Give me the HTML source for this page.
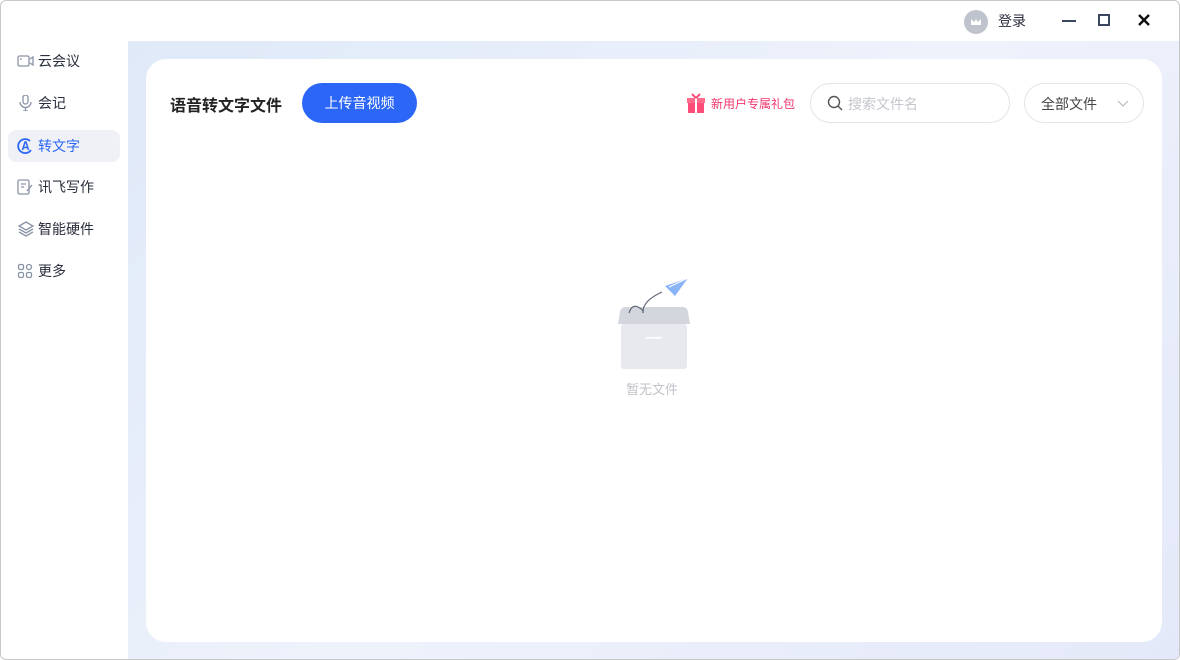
<!DOCTYPE html>
<html><head><meta charset="utf-8"><style>
*{box-sizing:border-box;margin:0;padding:0}
body{width:1180px;height:660px;overflow:hidden;font-family:"Liberation Sans","Noto Sans CJK SC",sans-serif;background:#fff}
.win{position:absolute;left:0;top:0;width:1180px;height:660px;border:1px solid #c8c8c8;border-radius:6px;overflow:hidden;background:#fff}
.main{position:absolute;left:127px;top:40px;right:0;bottom:0;background:linear-gradient(135deg,#dfe9f8,#eef2fb 50%,#e4e9f9)}
.card{position:absolute;left:18px;top:18px;right:17px;bottom:17px;background:#fff;border-radius:20px}
.nav{position:absolute;left:7px;width:112px;height:32px;border-radius:8px;font-size:14px;color:#2a2f3d;line-height:32px;padding-left:30px}
.nav svg{position:absolute;left:9px;top:8px}
.act{background:#eff1f6;color:#2b66f6}
</style></head><body><div class="win">
<div style="position:absolute;left:963px;top:9px;width:24px;height:24px;border-radius:50%;background:#bfc3cd"><svg width="24" height="24"><path d="M7 9l3 3 2-3 2 3 3-3v6H7z" fill="#fff"/></svg></div>
<div style="position:absolute;left:997px;top:10px;font-size:14px;color:#2a2f3d">登录</div>
<div style="position:absolute;left:1061px;top:19px;width:14px;height:2px;background:#3b4660"></div>
<div style="position:absolute;left:1097px;top:13px;width:12px;height:12px;border:2px solid #3b4660"></div>
<svg style="position:absolute;left:1136px;top:12px" width="14" height="14"><path d="M2 2l10 10M12 2L2 12" stroke="#111" stroke-width="2.4"/></svg>

<div class="nav" style="top:44px"><svg width="18" height="16"><rect x="1" y="3" width="11" height="10" rx="1.5" fill="none" stroke="#8a93a6" stroke-width="1.3"/><circle cx="4" cy="6" r=".9" fill="#8a93a6"/><path d="M13 6l3-2v8l-3-2" fill="none" stroke="#8a93a6" stroke-width="1.3"/></svg>云会议</div>
<div class="nav" style="top:86px"><svg width="18" height="16"><rect x="6" y="0" width="5" height="9" rx="2.5" fill="none" stroke="#8a93a6" stroke-width="1.3"/><path d="M3 7a5.5 5.5 0 0011 0M8.5 12.5V16M6 16h5" fill="none" stroke="#8a93a6" stroke-width="1.3"/></svg>会记</div>
<div class="nav act" style="top:129px"><svg width="18" height="16"><path d="M13 3A7 7 0 1014 12" fill="none" stroke="#2b66f6" stroke-width="1.8"/><path d="M5.5 12L8 4h1l2.5 8M6.5 9.5h4" fill="none" stroke="#2b66f6" stroke-width="1.5"/></svg>转文字</div>
<div class="nav" style="top:170px"><svg width="18" height="16"><rect x="1" y="1" width="11" height="14" rx="1.5" fill="none" stroke="#8a93a6" stroke-width="1.3"/><path d="M4 5h5M4 8h3M10 12l5-6" stroke="#8a93a6" stroke-width="1.3"/></svg>讯飞写作</div>
<div class="nav" style="top:212px"><svg width="18" height="16"><path d="M9 1l7 4-7 4-7-4zM2 8l7 4 7-4M2 11l7 4 7-4" fill="none" stroke="#8a93a6" stroke-width="1.3"/></svg>智能硬件</div>
<div class="nav" style="top:254px"><svg width="18" height="16"><rect x="1.5" y="1.5" width="5" height="5" rx="1.5" fill="none" stroke="#8a93a6" stroke-width="1.3"/><rect x="9.5" y="1.5" width="5" height="5" rx="2.5" fill="none" stroke="#8a93a6" stroke-width="1.3"/><rect x="1.5" y="9.5" width="5" height="5" rx="1.5" fill="none" stroke="#8a93a6" stroke-width="1.3"/><rect x="9.5" y="9.5" width="5" height="5" rx="1.5" fill="none" stroke="#8a93a6" stroke-width="1.3"/></svg>更多</div>

<div class="main"><div class="card">
<div style="position:absolute;left:24px;top:33px;font-size:16px;font-weight:bold;color:#222">语音转文字文件</div>
<div style="position:absolute;left:156px;top:24px;width:115px;height:40px;border-radius:20px;background:#2b66f6;color:#fff;font-size:14px;text-align:center;line-height:40px">上传音视频</div>
<svg style="position:absolute;left:540px;top:33px" width="20" height="22"><rect x="1" y="6" width="18" height="5" fill="#ff6b8a"/><rect x="2" y="11" width="16" height="10" fill="#ff4f78"/><rect x="9" y="6" width="2" height="15" fill="#fff"/><path d="M10 6L6 2M10 6l4-4" stroke="#ff4f78" stroke-width="2"/></svg>
<div style="position:absolute;left:565px;top:36px;font-size:12px;color:#f0356b">新用户专属礼包</div>
<div style="position:absolute;left:664px;top:24px;width:200px;height:40px;border:1px solid #e2e4ea;border-radius:20px"><svg style="position:absolute;left:16px;top:11px" width="16" height="16"><circle cx="7" cy="7" r="5.5" fill="none" stroke="#555" stroke-width="1.4"/><path d="M11 11l4 4" stroke="#555" stroke-width="1.4"/></svg><span style="position:absolute;left:37px;top:10px;font-size:14px;color:#c3c6cd">搜索文件名</span></div>
<div style="position:absolute;left:878px;top:24px;width:120px;height:40px;border:1px solid #e2e4ea;border-radius:20px"><span style="position:absolute;left:16px;top:10px;font-size:14px;color:#444">全部文件</span><svg style="position:absolute;left:92px;top:16px" width="12" height="8"><path d="M1 1l5 5 5-5" fill="none" stroke="#bbb" stroke-width="1.2"/></svg></div>
<svg style="position:absolute;left:468px;top:209px" width="80" height="104"><rect x="7" y="56" width="66" height="45" rx="3" fill="#e8e9ee"/><path d="M4 56l2-12q1-5 5-5h58q4 0 5 5l2 12z" fill="#d4d6dd"/><rect x="32" y="69" width="16" height="1.5" fill="#fff"/><path d="M15 45q3-9 9-6t5 6q-1-12 19-21" fill="none" stroke="#5d6575" stroke-width="1.2"/><path d="M51 18l23-8-13 18z" fill="#8ab4f8"/><path d="M55 19l19-9" stroke="#fff" stroke-width="1"/></svg>
<div style="position:absolute;left:480px;top:320px;font-size:13px;color:#c0c2c8">暂无文件</div>
</div></div>
</div></body></html>
